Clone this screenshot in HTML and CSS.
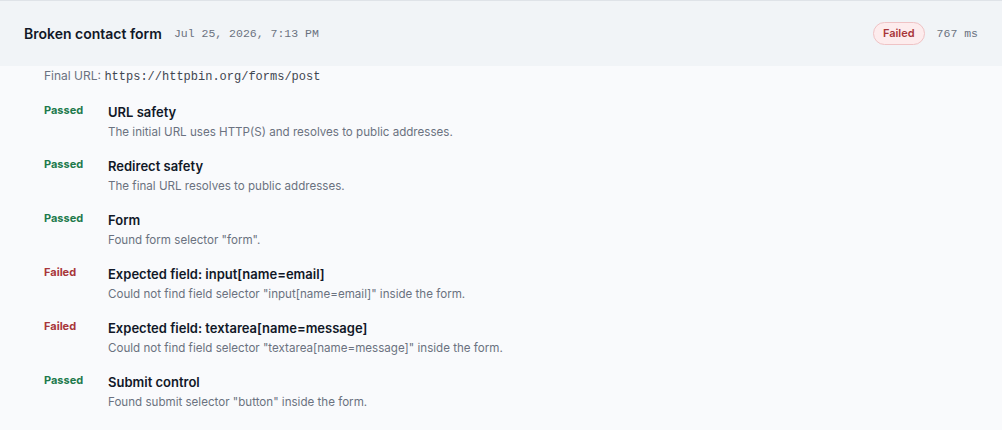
FILE: index.html
```html
<!DOCTYPE html>
<html lang="en">
<head>
    <meta charset="UTF-8">
    <meta name="viewport" content="width=device-width, initial-scale=1.0">
    <title>Run details</title>
    <link rel="stylesheet" href="styles.css">
</head>
<body>
    <div class="run">
        <div class="run-head">
            <h3 class="run-name">Broken contact form</h3>
            <span class="run-date">Jul 25, 2026, 7:13 PM</span>
            <span class="badge fail">Failed</span>
            <span class="run-time">767 ms</span>
        </div>
        <div class="run-body">
            <p class="final-url">Final URL: <code>https://httpbin.org/forms/post</code></p>
            <ul class="checks">
                <li class="check">
                    <span class="status pass">Passed</span>
                    <div>
                        <h4>URL safety</h4>
                        <p>The initial URL uses HTTP(S) and resolves to public addresses.</p>
                    </div>
                </li>
                <li class="check">
                    <span class="status pass">Passed</span>
                    <div>
                        <h4>Redirect safety</h4>
                        <p>The final URL resolves to public addresses.</p>
                    </div>
                </li>
                <li class="check">
                    <span class="status pass">Passed</span>
                    <div>
                        <h4>Form</h4>
                        <p>Found form selector "form".</p>
                    </div>
                </li>
                <li class="check">
                    <span class="status fail">Failed</span>
                    <div>
                        <h4>Expected field: input[name=email]</h4>
                        <p>Could not find field selector "input[name=email]" inside the form.</p>
                    </div>
                </li>
                <li class="check">
                    <span class="status fail">Failed</span>
                    <div>
                        <h4>Expected field: textarea[name=message]</h4>
                        <p>Could not find field selector "textarea[name=message]" inside the form.</p>
                    </div>
                </li>
                <li class="check">
                    <span class="status pass">Passed</span>
                    <div>
                        <h4>Submit control</h4>
                        <p>Found submit selector "button" inside the form.</p>
                    </div>
                </li>
            </ul>
        </div>
    </div>
</body>
</html>
```

FILE: styles.css
```css
* {
    margin: 0;
    padding: 0;
    box-sizing: border-box;
}
body {
    font-family: Inter, "Liberation Sans", sans-serif;
    background: #ffffff;
    color: #111827;
}
.run {
    border-top: 1px solid #dfe3e8;
    border-bottom: 1px solid #dfe3e8;
}
.run-head {
    display: flex;
    align-items: center;
    height: 65px;
    padding: 0 24px;
    background: #f1f4f7;
}
.run-name {
    font-size: 14px;
    font-weight: 600;
    color: #111827;
}
.run-date,
.run-time {
    font-family: "Liberation Mono", monospace;
    font-size: 11.5px;
    color: #6b7280;
}
.run-date {
    margin-left: 12px;
    flex: 1;
}
.badge {
    font-size: 11px;
    font-weight: 600;
    padding: 4px 9px;
    border-radius: 999px;
    line-height: 13px;
}
.badge.fail {
    background: #fdeced;
    border: 1px solid #efc3c5;
    color: #a8363a;
}
.run-time {
    margin-left: 12px;
}
.run-body {
    background: #f9fafc;
    padding: 1px 24px 19px 44px;
}
.final-url {
    font-size: 12px;
    line-height: 18px;
    color: #6b7280;
}
.final-url code {
    font-family: "Liberation Mono", monospace;
    font-size: 12px;
    color: #3f4650;
}
.checks {
    list-style: none;
    margin-top: 17px;
    display: flex;
    flex-direction: column;
    gap: 16px;
}
.check {
    display: grid;
    grid-template-columns: 64px 1fr;
}
.status {
    font-size: 11px;
    font-weight: 700;
    line-height: 14px;
}
.status.pass {
    color: #1e7a4c;
}
.status.fail {
    color: #a8363a;
}
.check h4 {
    font-size: 13px;
    font-weight: 600;
    line-height: 18px;
    color: #111827;
}
.check p {
    margin-top: 2px;
    font-size: 11.6px;
    line-height: 18px;
    color: #6b7280;
}
```
